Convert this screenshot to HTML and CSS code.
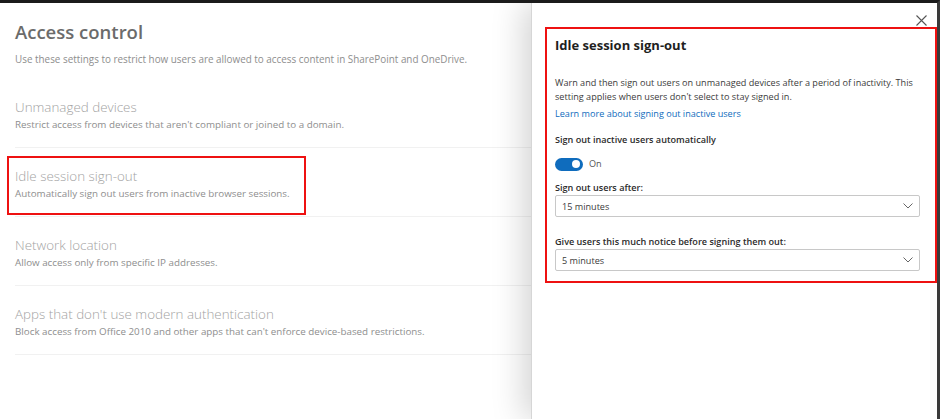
FILE: index.html
```html
<!DOCTYPE html>
<html lang="en">
<head>
<meta charset="utf-8">
<title>Access control</title>
<link rel="stylesheet" href="styles.css">
</head>
<body>
<div class="frame">
  <main class="page">
    <h1 class="page-title">Access control</h1>
    <p class="page-intro">Use these settings to restrict how users are allowed to access content in SharePoint and OneDrive.</p>
    <ul class="settings">
      <li class="setting">
        <div class="setting-title">Unmanaged devices</div>
        <div class="setting-desc">Restrict access from devices that aren't compliant or joined to a domain.</div>
      </li>
      <li class="setting">
        <div class="setting-title">Idle session sign-out</div>
        <div class="setting-desc">Automatically sign out users from inactive browser sessions.</div>
        <span class="highlight highlight-row"></span>
      </li>
      <li class="setting">
        <div class="setting-title">Network location</div>
        <div class="setting-desc">Allow access only from specific IP addresses.</div>
      </li>
      <li class="setting">
        <div class="setting-title">Apps that don't use modern authentication</div>
        <div class="setting-desc">Block access from Office 2010 and other apps that can't enforce device-based restrictions.</div>
      </li>
    </ul>
  </main>

  <aside class="panel">
    <button class="close" aria-label="Close">
      <svg width="11" height="11" viewBox="0 0 11 11"><path d="M0.5 0.5 L10.5 10.5 M10.5 0.5 L0.5 10.5" stroke="#555" stroke-width="1.1" fill="none"/></svg>
    </button>
    <section class="panel-body">
      <h2 class="panel-title">Idle session sign-out</h2>
      <p class="panel-text">Warn and then sign out users on unmanaged devices after a period of inactivity. This setting applies when users don't select to stay signed in.</p>
      <a class="panel-link" href="#">Learn more about signing out inactive users</a>
      <div class="field-label field-label-first">Sign out inactive users automatically</div>
      <div class="toggle-row">
        <span class="toggle"><span class="knob"></span></span>
        <span class="toggle-text">On</span>
      </div>
      <div class="field-label">Sign out users after:</div>
      <div class="dropdown">
        <span>15 minutes</span>
        <svg class="chev" width="10" height="6" viewBox="0 0 10 6"><path d="M0.5 0.5 L5 5 L9.5 0.5" stroke="#666" stroke-width="1" fill="none"/></svg>
      </div>
      <div class="field-label field-label-gap">Give users this much notice before signing them out:</div>
      <div class="dropdown">
        <span>5 minutes</span>
        <svg class="chev" width="10" height="6" viewBox="0 0 10 6"><path d="M0.5 0.5 L5 5 L9.5 0.5" stroke="#666" stroke-width="1" fill="none"/></svg>
      </div>
    </section>
  </aside>
</div>
</body>
</html>
```
FILE: styles.css
```css
* { box-sizing: border-box; }
html, body { margin: 0; padding: 0; background: #fff; }
body { font-family: "Open Sans", "Noto Sans", sans-serif; }

.frame {
  position: relative;
  width: 940px;
  height: 419px;
  border-top: 3px solid #1b1b1b;
  border-right: 3px solid #3a3a3a;
  overflow: hidden;
  background: #fff;
}

.page {
  padding: 14px 0 0 15px;
}
.page-title {
  margin: 0;
  font-size: 18.5px;
  line-height: 30px;
  font-weight: 600;
  color: #6b6b6b;
}
.page-intro {
  margin: 4px 0 0;
  font-size: 9.9px;
  line-height: 16px;
  color: #8e8e8e;
}
.settings {
  list-style: none;
  margin: 12px 0 0;
  padding: 0;
}
.setting {
  position: relative;
  padding: 18px 0 14px;
  border-bottom: 1px solid #f1f1f1;
}
.setting-title {
  font-size: 13.4px;
  line-height: 20px;
  font-weight: 300;
  color: #a3a3a3;
}
.setting-desc {
  font-size: 9.8px;
  line-height: 16px;
  color: #8e8e8e;
}

.highlight { position: absolute; border: 2px solid #ee1111; pointer-events: none; }
.highlight-row { left: -8px; top: 8px; width: 299px; height: 59px; }

.panel {
  position: absolute;
  top: 0;
  left: 531px;
  right: 0;
  bottom: 0;
  background: #fff;
  border-left: 1px solid #d6d6d6;
  box-shadow: -8px 0 30px rgba(0, 0, 0, 0.17);
  padding: 24px 0 0 13px;
}
.close {
  position: absolute;
  top: 12px;
  right: 10px;
  width: 11px;
  height: 11px;
  padding: 0;
  border: 0;
  background: none;
  display: flex;
}
.panel-body {
  border: 2px solid #ee1111;
  height: 256px;
  padding: 6px 15px 0 8px;
  color: #323130;
}
.panel-title {
  margin: 0;
  font-size: 13px;
  line-height: 20px;
  font-weight: 700;
  color: #1f1f1f;
}
.panel-text {
  margin: 21px 0 0;
  font-size: 9.1px;
  line-height: 14px;
  color: #3b3b3b;
}
.panel-link {
  display: block;
  margin-top: 3px;
  font-size: 9.1px;
  line-height: 14px;
  color: #0f6cbd;
  text-decoration: none;
}
.field-label {
  font-size: 9.1px;
  line-height: 14px;
  font-weight: 600;
  color: #2b2b2b;
}
.field-label-first { margin-top: 12px; }
.field-label-gap { margin-top: 18px; }
.toggle-row {
  display: flex;
  align-items: center;
  gap: 6px;
  margin: 10px 0 10px;
}
.toggle {
  width: 28px;
  height: 13px;
  border-radius: 7px;
  background: #0f6cbd;
  display: flex;
  align-items: center;
  justify-content: flex-end;
  padding-right: 3px;
}
.knob {
  width: 8px;
  height: 8px;
  border-radius: 50%;
  background: #fff;
}
.toggle-text {
  font-size: 9.1px;
  line-height: 14px;
  color: #555;
}
.dropdown {
  margin-top: 0;
  height: 22px;
  border: 1px solid #c8c8c8;
  border-radius: 2px;
  display: flex;
  align-items: center;
  justify-content: space-between;
  padding: 0 6px 0 6px;
  font-size: 9.1px;
  color: #3b3b3b;
}
.chev { display: block; }
```
